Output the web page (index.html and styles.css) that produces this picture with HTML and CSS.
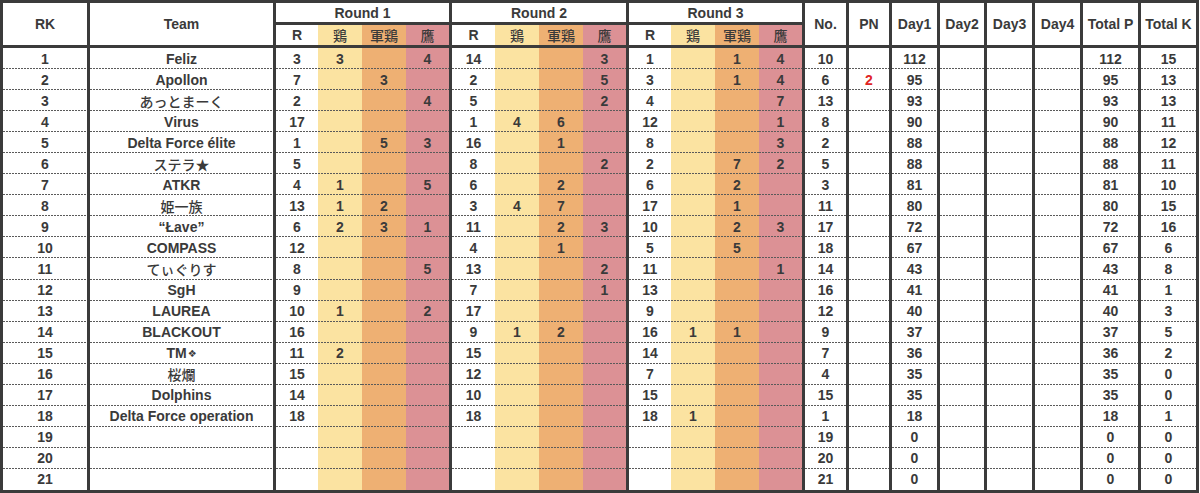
FILE: index.html
```html
<!DOCTYPE html>
<html lang="ja">
<head>
<meta charset="utf-8">
<title>Standings</title>
<link rel="stylesheet" href="styles.css">
</head>
<body>
<div class="board">
  <div class="head">
    <div class="h tall c-rk">RK</div>
    <div class="h tall c-team">Team</div>
    <div class="h round">Round 1</div>
    <div class="h round">Round 2</div>
    <div class="h round">Round 3</div>
    <div class="h tall c-no">No.</div>
    <div class="h tall c-pn">PN</div>
    <div class="h tall c-d1">Day1</div>
    <div class="h tall c-d2">Day2</div>
    <div class="h tall c-d3">Day3</div>
    <div class="h tall c-d4">Day4</div>
    <div class="h tall c-tp">Total P</div>
    <div class="h tall c-tk">Total K</div>
    <div class="h sub">R</div><div class="h sub y jp">鶏</div><div class="h sub o jp">軍鶏</div><div class="h sub p end jp">鷹</div>
    <div class="h sub">R</div><div class="h sub y jp">鶏</div><div class="h sub o jp">軍鶏</div><div class="h sub p end jp">鷹</div>
    <div class="h sub">R</div><div class="h sub y jp">鶏</div><div class="h sub o jp">軍鶏</div><div class="h sub p end jp">鷹</div>
  </div>
  <div class="body">
    <div class="row"><span>1</span><span>Feliz</span><span>3</span><span>3</span><span></span><span>4</span><span>14</span><span></span><span></span><span>3</span><span>1</span><span></span><span>1</span><span>4</span><span>10</span><span></span><span>112</span><span></span><span></span><span></span><span>112</span><span>15</span></div>
    <div class="row"><span>2</span><span>Apollon</span><span>7</span><span></span><span>3</span><span></span><span>2</span><span></span><span></span><span>5</span><span>3</span><span></span><span>1</span><span>4</span><span>6</span><span class="pen">2</span><span>95</span><span></span><span></span><span></span><span>95</span><span>13</span></div>
    <div class="row"><span>3</span><span class="jp">あっとまーく</span><span>2</span><span></span><span></span><span>4</span><span>5</span><span></span><span></span><span>2</span><span>4</span><span></span><span></span><span>7</span><span>13</span><span></span><span>93</span><span></span><span></span><span></span><span>93</span><span>13</span></div>
    <div class="row"><span>4</span><span>Virus</span><span>17</span><span></span><span></span><span></span><span>1</span><span>4</span><span>6</span><span></span><span>12</span><span></span><span></span><span>1</span><span>8</span><span></span><span>90</span><span></span><span></span><span></span><span>90</span><span>11</span></div>
    <div class="row"><span>5</span><span>Delta Force élite</span><span>1</span><span></span><span>5</span><span>3</span><span>16</span><span></span><span>1</span><span></span><span>8</span><span></span><span></span><span>3</span><span>2</span><span></span><span>88</span><span></span><span></span><span></span><span>88</span><span>12</span></div>
    <div class="row"><span>6</span><span class="jp">ステラ★</span><span>5</span><span></span><span></span><span></span><span>8</span><span></span><span></span><span>2</span><span>2</span><span></span><span>7</span><span>2</span><span>5</span><span></span><span>88</span><span></span><span></span><span></span><span>88</span><span>11</span></div>
    <div class="row"><span>7</span><span>ATKR</span><span>4</span><span>1</span><span></span><span>5</span><span>6</span><span></span><span>2</span><span></span><span>6</span><span></span><span>2</span><span></span><span>3</span><span></span><span>81</span><span></span><span></span><span></span><span>81</span><span>10</span></div>
    <div class="row"><span>8</span><span class="jp">姫一族</span><span>13</span><span>1</span><span>2</span><span></span><span>3</span><span>4</span><span>7</span><span></span><span>17</span><span></span><span>1</span><span></span><span>11</span><span></span><span>80</span><span></span><span></span><span></span><span>80</span><span>15</span></div>
    <div class="row"><span>9</span><span>“Łave”</span><span>6</span><span>2</span><span>3</span><span>1</span><span>11</span><span></span><span>2</span><span>3</span><span>10</span><span></span><span>2</span><span>3</span><span>17</span><span></span><span>72</span><span></span><span></span><span></span><span>72</span><span>16</span></div>
    <div class="row"><span>10</span><span>COMPASS</span><span>12</span><span></span><span></span><span></span><span>4</span><span></span><span>1</span><span></span><span>5</span><span></span><span>5</span><span></span><span>18</span><span></span><span>67</span><span></span><span></span><span></span><span>67</span><span>6</span></div>
    <div class="row"><span>11</span><span class="jp">てぃぐりす</span><span>8</span><span></span><span></span><span>5</span><span>13</span><span></span><span></span><span>2</span><span>11</span><span></span><span></span><span>1</span><span>14</span><span></span><span>43</span><span></span><span></span><span></span><span>43</span><span>8</span></div>
    <div class="row"><span>12</span><span>SgH</span><span>9</span><span></span><span></span><span></span><span>7</span><span></span><span></span><span>1</span><span>13</span><span></span><span></span><span></span><span>16</span><span></span><span>41</span><span></span><span></span><span></span><span>41</span><span>1</span></div>
    <div class="row"><span>13</span><span>LAUREA</span><span>10</span><span>1</span><span></span><span>2</span><span>17</span><span></span><span></span><span></span><span>9</span><span></span><span></span><span></span><span>12</span><span></span><span>40</span><span></span><span></span><span></span><span>40</span><span>3</span></div>
    <div class="row"><span>14</span><span>BLACKOUT</span><span>16</span><span></span><span></span><span></span><span>9</span><span>1</span><span>2</span><span></span><span>16</span><span>1</span><span>1</span><span></span><span>9</span><span></span><span>37</span><span></span><span></span><span></span><span>37</span><span>5</span></div>
    <div class="row"><span>15</span><span>TM<span class="orn">❖</span></span><span>11</span><span>2</span><span></span><span></span><span>15</span><span></span><span></span><span></span><span>14</span><span></span><span></span><span></span><span>7</span><span></span><span>36</span><span></span><span></span><span></span><span>36</span><span>2</span></div>
    <div class="row"><span>16</span><span class="jp">桜爛</span><span>15</span><span></span><span></span><span></span><span>12</span><span></span><span></span><span></span><span>7</span><span></span><span></span><span></span><span>4</span><span></span><span>35</span><span></span><span></span><span></span><span>35</span><span>0</span></div>
    <div class="row"><span>17</span><span>Dolphins</span><span>14</span><span></span><span></span><span></span><span>10</span><span></span><span></span><span></span><span>15</span><span></span><span></span><span></span><span>15</span><span></span><span>35</span><span></span><span></span><span></span><span>35</span><span>0</span></div>
    <div class="row"><span>18</span><span>Delta Force operation</span><span>18</span><span></span><span></span><span></span><span>18</span><span></span><span></span><span></span><span>18</span><span>1</span><span></span><span></span><span>1</span><span></span><span>18</span><span></span><span></span><span></span><span>18</span><span>1</span></div>
    <div class="row"><span>19</span><span></span><span></span><span></span><span></span><span></span><span></span><span></span><span></span><span></span><span></span><span></span><span></span><span></span><span>19</span><span></span><span>0</span><span></span><span></span><span></span><span>0</span><span>0</span></div>
    <div class="row"><span>20</span><span></span><span></span><span></span><span></span><span></span><span></span><span></span><span></span><span></span><span></span><span></span><span></span><span></span><span>20</span><span></span><span>0</span><span></span><span></span><span></span><span>0</span><span>0</span></div>
    <div class="row"><span>21</span><span></span><span></span><span></span><span></span><span></span><span></span><span></span><span></span><span></span><span></span><span></span><span></span><span></span><span>21</span><span></span><span>0</span><span></span><span></span><span></span><span>0</span><span>0</span></div>
  </div>
</div>
</body>
</html>
```

FILE: styles.css
```css
* { box-sizing: border-box; }

html, body {
  margin: 0;
  padding: 0;
  background: #ffffff;
}

body {
  font-family: "Liberation Sans", Arial, "Noto Sans CJK JP", sans-serif;
  font-weight: 700;
  font-size: 14px;
  color: #3a3a3a;
}

.board {
  --line: #3b3b3b;
  --cols: 87px 186px 42px 44px 44px 46px 43px 44px 44px 46px 42px 44px 44px 46px 44px 43px 48px 47px 48px 48px 58px 58px;
  width: 1199px;
  height: 493px;
  border-left: 3px solid var(--line);
  border-top: 3px solid var(--line);
  border-bottom: 3px solid var(--line);
  display: flex;
  flex-direction: column;
}

.head {
  display: grid;
  grid-template-columns: var(--cols);
  grid-template-rows: 22px 23px;
  flex: 0 0 45px;
}

.h {
  display: flex;
  align-items: center;
  justify-content: center;
  white-space: nowrap;
  background: #ffffff;
}

.tall {
  grid-row: 1 / 3;
  border-right: 3px solid var(--line);
  border-bottom: 3px solid var(--line);
}

.c-rk { grid-column: 1; }
.c-team { grid-column: 2; }
.c-no { grid-column: 15; }
.c-pn { grid-column: 16; }
.c-d1 { grid-column: 17; }
.c-d2 { grid-column: 18; }
.c-d3 { grid-column: 19; }
.c-d4 { grid-column: 20; }
.c-tp { grid-column: 21; }
.c-tk { grid-column: 22; }

.round {
  grid-column: span 4;
  border-right: 3px solid var(--line);
  border-bottom: 3px solid var(--line);
}

.sub {
  border-bottom: 3px solid var(--line);
}

.sub.end {
  border-right: 3px solid var(--line);
}

.jp {
  font-family: "Noto Sans CJK JP", "Liberation Sans", sans-serif;
  font-weight: 500;
}

.y { background-color: #fbe3a1; }
.o { background-color: #eeb073; }
.p { background-color: #dc9195; }

.body {
  flex: 1 1 auto;
  display: flex;
  flex-direction: column;
}

.row {
  flex: 1 1 0;
  display: grid;
  grid-template-columns: var(--cols);
  min-height: 0;
}

.row > span {
  display: flex;
  align-items: center;
  justify-content: center;
  white-space: nowrap;
  background-color: #ffffff;
  background-image: linear-gradient(to right, #5a5a5a 2px, transparent 2px);
  background-size: 3px 1px;
  background-repeat: repeat-x;
  background-position: left bottom;
}

.row:last-child > span {
  background-image: none;
}

.row > span:nth-child(4),
.row > span:nth-child(8),
.row > span:nth-child(12) {
  background-color: #fbe3a1;
}

.row > span:nth-child(5),
.row > span:nth-child(9),
.row > span:nth-child(13) {
  background-color: #eeb073;
}

.row > span:nth-child(6),
.row > span:nth-child(10),
.row > span:nth-child(14) {
  background-color: #dc9195;
}

.row > span:nth-child(1),
.row > span:nth-child(2),
.row > span:nth-child(6),
.row > span:nth-child(10),
.row > span:nth-child(n+14) {
  border-right: 3px solid var(--line);
}

.row > span.pen {
  color: #e02424;
}

.orn {
  font-family: "DejaVu Sans", sans-serif;
  font-size: 10px;
  margin-left: 1px;
}
```
